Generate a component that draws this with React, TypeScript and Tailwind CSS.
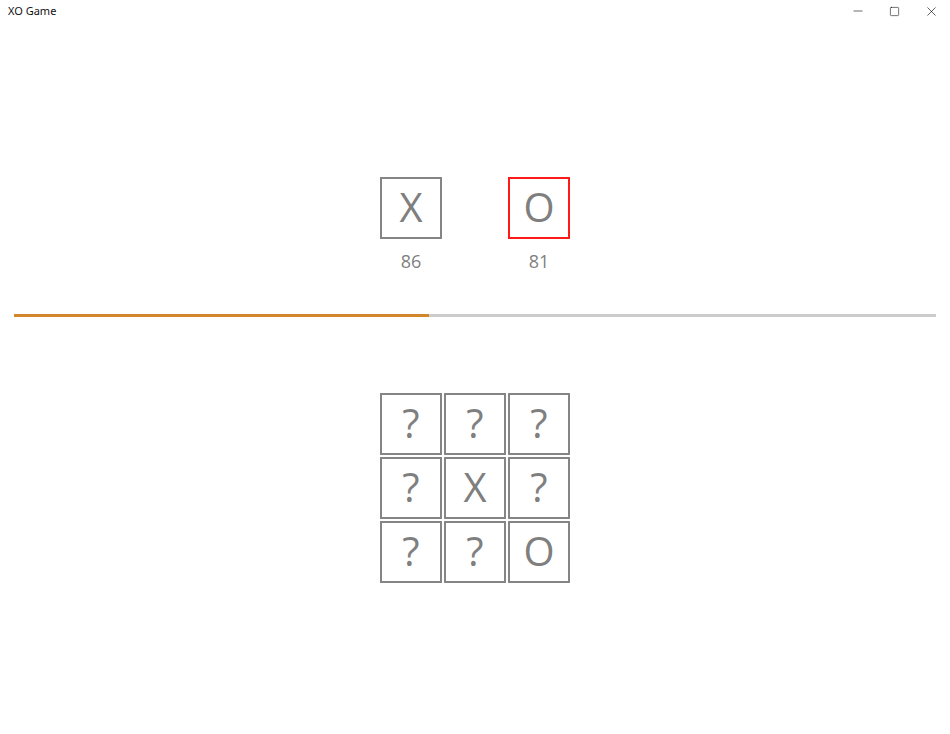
import { Minus, Square, X } from 'lucide-react';

const board = ['?', '?', '?', '?', 'X', '?', '?', '?', 'O'];

function Cell({ mark, active }: { mark: string; active?: boolean }) {
  return (
    <div
      className={`w-[62px] h-[62px] border-2 flex items-center justify-center text-[40px] leading-none text-[#7f7f7f] ${
        active ? 'border-[#ff1a1a]' : 'border-[#858585]'
      }`}
    >
      <span className="-mt-[2px]">{mark}</span>
    </div>
  );
}

export default function App() {
  const progress = (429 - 14) / (936 - 14);
  return (
    <div className="w-[950px] h-[734px] bg-white font-['Open_Sans','Noto_Sans',sans-serif] select-none">
      {/* Title bar */}
      <div className="h-[22px] flex items-center justify-between">
        <span className="pl-[8px] text-[11px] text-[#111] font-['Noto_Sans',sans-serif]">XO Game</span>
        <div className="flex items-center h-full text-black">
          <div className="w-[37px] flex justify-center"><Minus size={14} strokeWidth={1} /></div>
          <div className="w-[37px] flex justify-center"><Square size={11} strokeWidth={1.2} /></div>
          <div className="w-[37px] flex justify-center"><X size={15} strokeWidth={1} /></div>
        </div>
      </div>

      {/* Scores */}
      <div className="pt-[155px] flex justify-center gap-[66px]">
        <div className="flex flex-col items-center">
          <Cell mark="X" />
          <span className="mt-[10px] text-[18px] leading-6 text-[#7f7f7f]">86</span>
        </div>
        <div className="flex flex-col items-center">
          <Cell mark="O" active />
          <span className="mt-[10px] text-[18px] leading-6 text-[#7f7f7f]">81</span>
        </div>
      </div>

      {/* Progress */}
      <div className="mt-[41px] mx-[14px] h-[3px] bg-[#cccccc]">
        <div className="h-full bg-[#d3862a]" style={{ width: `${progress * 100}%` }} />
      </div>

      {/* Board */}
      <div className="mt-[76px] flex justify-center">
        <div className="grid grid-cols-3 gap-[2px]">
          {board.map((m, i) => (
            <Cell key={i} mark={m} />
          ))}
        </div>
      </div>
    </div>
  );
}
